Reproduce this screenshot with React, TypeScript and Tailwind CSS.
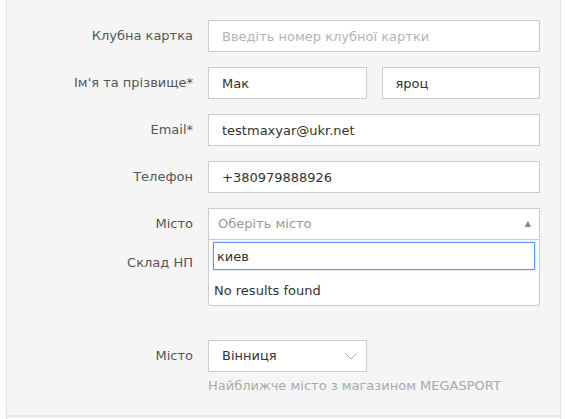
import { useState } from 'react'

function Row({ label, children, className = '' }: { label: string; children: React.ReactNode; className?: string }) {
  return (
    <div className={`flex items-center ${className}`}>
      <label className="w-[201px] shrink-0 pr-[15px] text-right text-[13px] text-[#555]">{label}</label>
      <div className="flex w-[332px] gap-[15px]">{children}</div>
    </div>
  )
}

const inputCls =
  'h-8 w-full border border-[#ccc] bg-white px-[13px] text-[13px] text-[#333] outline-none placeholder:text-[#b4b4b4]'

export default function App() {
  const [card, setCard] = useState('')
  const [first, setFirst] = useState('Мак')
  const [last, setLast] = useState('яроц')
  const [email, setEmail] = useState('testmaxyar@ukr.net')
  const [phone, setPhone] = useState('+380979888926')
  const [search, setSearch] = useState('киев')

  return (
    <div className="h-[419px] overflow-hidden bg-white pl-[6px] pr-[4px] font-['DejaVu_Sans',Verdana,sans-serif]">
      <div className="border-x border-[#e3e3e3] bg-[#f5f5f5] pt-5">
        <div className="flex flex-col gap-[15px] pb-[15px]">
          <Row label="Клубна картка">
            <input className={inputCls} placeholder="Введіть номер клубної картки" value={card} onChange={(e) => setCard(e.target.value)} />
          </Row>
          <Row label="Ім'я та прізвище*">
            <input className={`${inputCls} w-[159px]`} value={first} onChange={(e) => setFirst(e.target.value)} />
            <input className={`${inputCls} w-[158px]`} value={last} onChange={(e) => setLast(e.target.value)} />
          </Row>
          <Row label="Email*">
            <input className={inputCls} value={email} onChange={(e) => setEmail(e.target.value)} />
          </Row>
          <Row label="Телефон">
            <input className={inputCls} value={phone} onChange={(e) => setPhone(e.target.value)} />
          </Row>
          <Row label="Місто">
            <div className="relative w-full">
              <div className="flex h-8 w-full items-center justify-between border border-[#ccc] bg-white pl-[9px] pr-[8px] text-[13px] text-[#999]">
                <span>Оберіть місто</span>
                <span className="text-[8px] text-[#888]">▲</span>
              </div>
              <div className="absolute left-0 top-8 z-10 w-full rounded-b-[3px] border border-t-0 border-[#ccc] bg-white px-1 pb-[4px] pt-[2px]">
                <input
                  className="h-[28px] w-full border border-[#5897fb] px-[3px] text-[13px] text-[#333] outline-none shadow-[0_0_3px_rgba(88,151,251,0.4)]"
                  value={search}
                  onChange={(e) => setSearch(e.target.value)}
                />
                <div className="px-[1px] pt-[11px] text-[13px] text-[#333]">No results found</div>
              </div>
            </div>
          </Row>
          <Row label="Склад НП" className="-mt-[8px]">
            <div className="h-8 w-full" />
          </Row>
        </div>
        <div className="pt-[46px] pb-[19px]">
          <Row label="Місто">
            <div className="flex h-8 w-[159px] items-center justify-between border border-[#ccc] bg-white pl-[13px] pr-[8px] text-[13px] text-[#333]">
              <span>Вінниця</span>
              <svg width="14" height="8" viewBox="0 0 14 8" fill="none" stroke="#aaa" strokeWidth="1">
                <path d="M1 1l6 6 6-6" />
              </svg>
            </div>
          </Row>
          <div className="pl-[201px] pt-[4px] text-[13px] text-[#aaa]">Найближче місто з магазином MEGASPORT</div>
        </div>
        <div className="h-[2px] bg-[#e6e6e6]" />
        <div className="h-4" />
      </div>
    </div>
  )
}
